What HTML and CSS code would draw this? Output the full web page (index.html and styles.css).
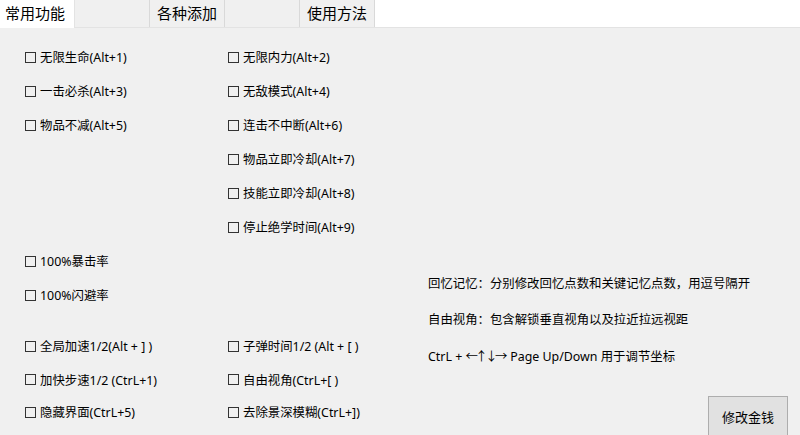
FILE: index.html
```html
<!DOCTYPE html>
<html lang="zh-CN">
<head>
<meta charset="utf-8">
<title>常用功能</title>
<link rel="stylesheet" href="styles.css">
</head>
<body>
<div class="window">
  <div class="tabs">
    <div class="tab active">常用功能</div>
    <div class="tab"></div>
    <div class="tab">各种添加</div>
    <div class="tab"></div>
    <div class="tab">使用方法</div>
  </div>
  <div class="content">
    <div class="checks">
      <label class="chk"><span class="box"></span>无限生命(Alt+1)</label>
      <label class="chk"><span class="box"></span>无限内力(Alt+2)</label>
      <label class="chk"><span class="box"></span>一击必杀(Alt+3)</label>
      <label class="chk"><span class="box"></span>无敌模式(Alt+4)</label>
      <label class="chk"><span class="box"></span>物品不减(Alt+5)</label>
      <label class="chk"><span class="box"></span>连击不中断(Alt+6)</label>
      <div></div>
      <label class="chk"><span class="box"></span>物品立即冷却(Alt+7)</label>
      <div></div>
      <label class="chk"><span class="box"></span>技能立即冷却(Alt+8)</label>
      <div></div>
      <label class="chk"><span class="box"></span>停止绝学时间(Alt+9)</label>
      <label class="chk"><span class="box"></span>100%暴击率</label>
      <div></div>
      <label class="chk"><span class="box"></span>100%闪避率</label>
      <div></div>
      <div></div>
      <div></div>
      <label class="chk"><span class="box"></span>全局加速1/2(Alt + ] )</label>
      <label class="chk"><span class="box"></span>子弹时间1/2 (Alt + [ )</label>
      <label class="chk"><span class="box"></span>加快步速1/2 (CtrL+1)</label>
      <label class="chk"><span class="box"></span>自由视角(CtrL+[ )</label>
      <label class="chk"><span class="box"></span>隐藏界面(CtrL+5)</label>
      <label class="chk"><span class="box"></span>去除景深模糊(CtrL+])</label>
    </div>
    <div class="side">
      <p class="note">回忆记忆：分别修改回忆点数和关键记忆点数，用逗号隔开</p>
      <p class="note">自由视角：包含解锁垂直视角以及拉近拉远视距</p>
      <p class="note">CtrL + <span class="arrows">←↑↓→</span> Page Up/Down 用于调节坐标</p>
      <button class="btn">修改金钱</button>
    </div>
  </div>
</div>
</body>
</html>
```

FILE: styles.css
```css
html, body {
  margin: 0;
  padding: 0;
}
body {
  width: 800px;
  height: 435px;
  overflow: hidden;
  background: #f0f0f0;
  font-family: "Noto Sans", "Noto Sans CJK SC", sans-serif;
  color: #000;
}
.window {
  display: flex;
  flex-direction: column;
  height: 435px;
}
.tabs {
  display: flex;
  height: 27px;
  background: #ffffff;
  border-bottom: 1px solid #e3e3e3;
}
.tab {
  width: 75px;
  height: 27px;
  box-sizing: border-box;
  border-right: 1px solid #d9d9d9;
  background: #f0f0f0;
  font-size: 15px;
  line-height: 27px;
  text-align: center;
}
.tab.active {
  background: #ffffff;
  height: 28px;
  text-align: left;
  padding-left: 5px;
  border-right: 1px solid #e3e3e3;
  position: relative;
  z-index: 1;
}
.content {
  display: flex;
  flex: 1;
}
.checks {
  display: grid;
  grid-template-columns: 203px 200px;
  grid-template-rows: repeat(8, 34px) 17px 34px 33px 32px;
  padding: 12px 0 0 25px;
  align-content: start;
}
.chk {
  display: flex;
  align-items: center;
  gap: 4px;
  font-size: 12.4px;
  white-space: nowrap;
}
.box {
  width: 11px;
  height: 11px;
  box-sizing: border-box;
  border: 1px solid #333;
  background: transparent;
}
.side {
  flex: 1;
  display: flex;
  flex-direction: column;
  padding-top: 238px;
  padding-right: 12px;
}
.note {
  margin: 0;
  height: 36px;
  line-height: 36px;
  font-size: 12.4px;
  white-space: nowrap;
}
.arrows {
  font-family: "Noto Sans CJK SC", sans-serif;
  letter-spacing: -2.5px;
  margin-right: 2px;
}
.btn {
  align-self: flex-end;
  margin-top: 22px;
  width: 80px;
  height: 44px;
  background: #e1e1e1;
  border: 1px solid #adadad;
  font-family: "Noto Sans CJK SC", sans-serif;
  font-size: 13px;
  color: #000;
  padding: 0 0 4px 0;
}
```
